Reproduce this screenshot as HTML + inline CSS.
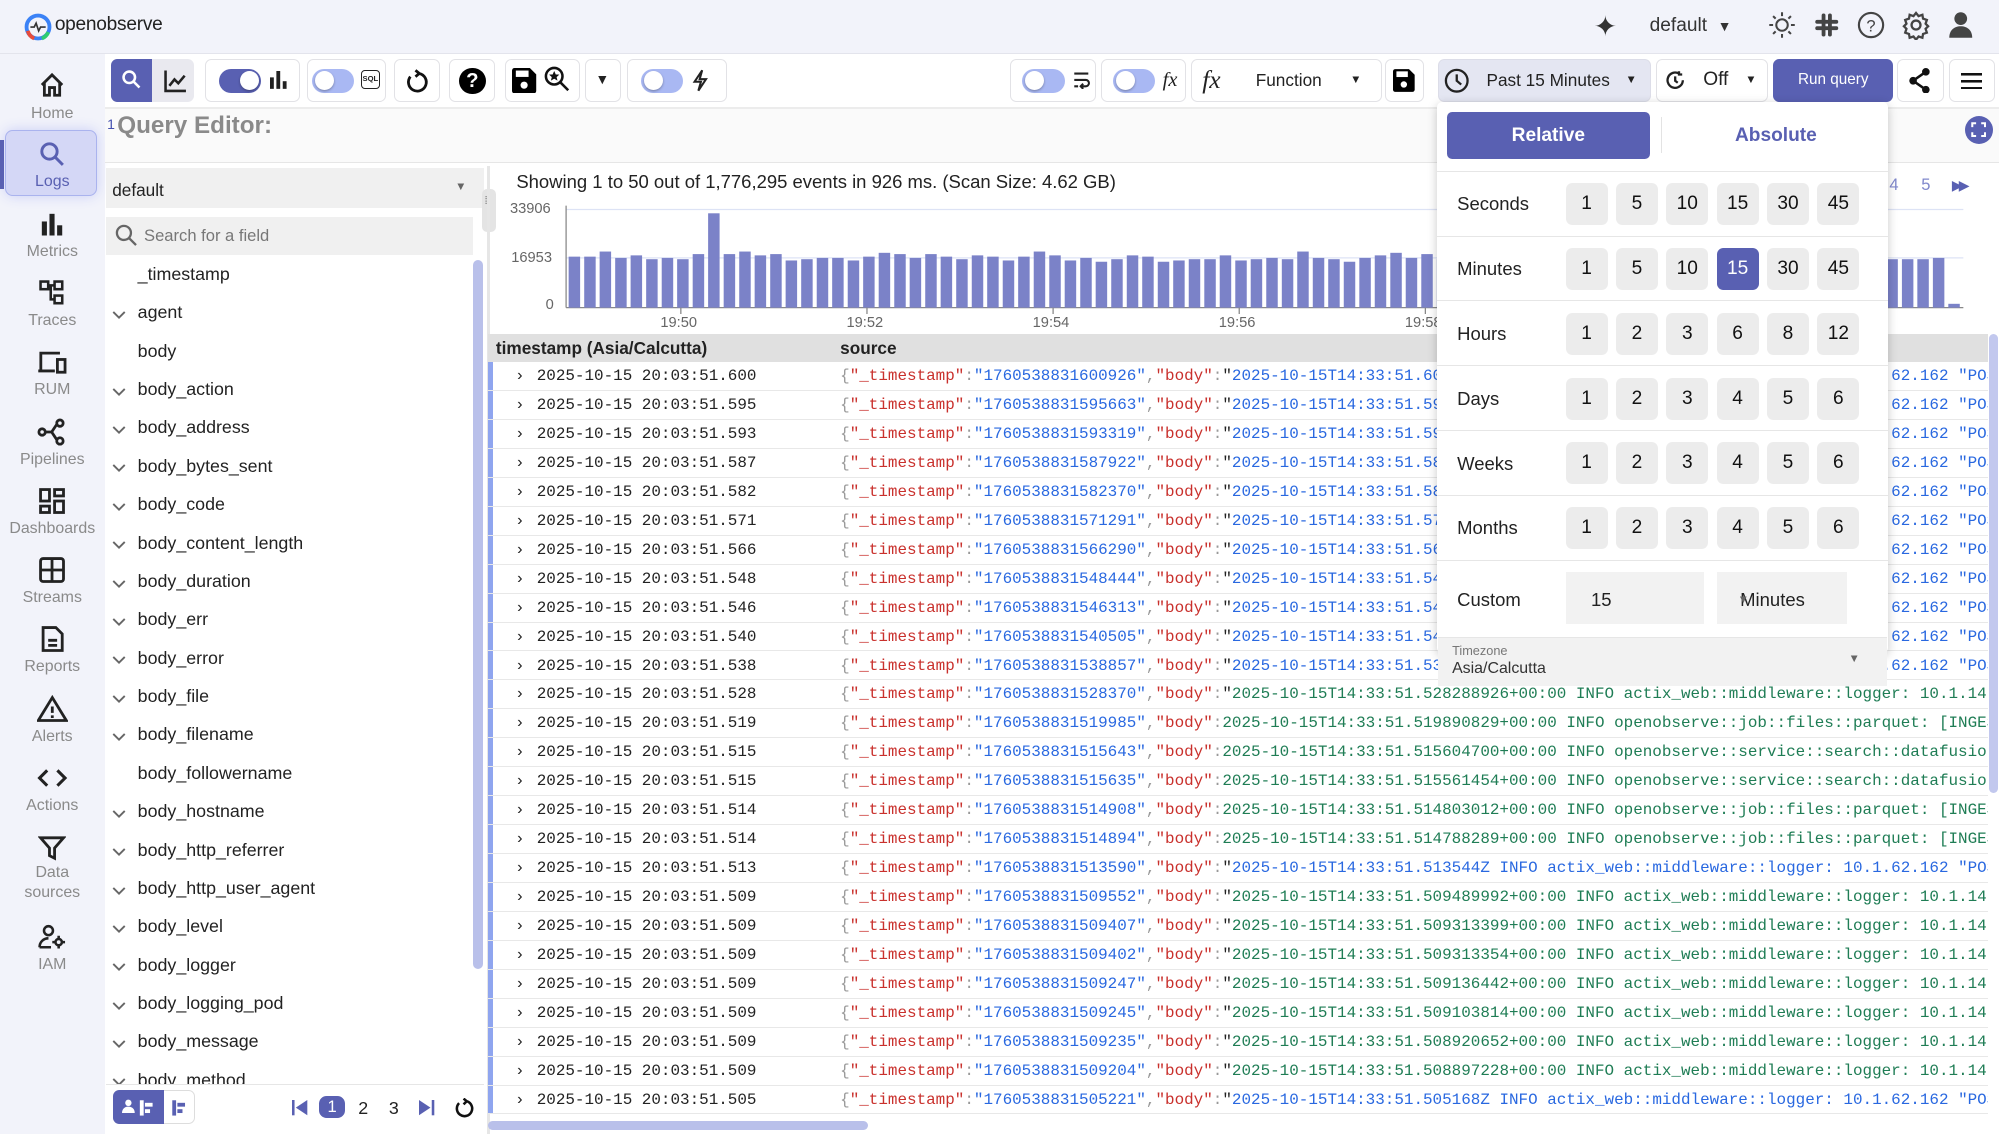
<!DOCTYPE html>
<html><head><meta charset="utf-8">
<style>
*{box-sizing:border-box;margin:0;padding:0}
html,body{width:1999px;height:1134px;overflow:hidden;background:#fff}
#r{zoom:1.27487;width:1568px;height:890px;position:relative;font-family:"Liberation Sans",sans-serif;color:#222;overflow:hidden;background:#fff}
.a{position:absolute}
.hdr{left:0;top:0;width:1568px;height:42px;background:#f2f3fa;border-bottom:1px solid #e3e4ec}
.nav{left:0;top:42px;width:82px;height:848px;background:#f2f3fa}
.ni{position:absolute;left:0;width:82px;text-align:center;font-size:12.5px;color:#8a8a8a}
.ni svg{display:block;margin:0 auto 4px}
.tb{position:absolute;top:46px;height:34px;border:1px solid #e2e2e6;border-radius:5px;background:#fff}
.tog{position:absolute;width:33px;height:19px;border-radius:10px;background:#a9b8f3}
.tog i{position:absolute;top:2px;width:15px;height:15px;border-radius:50%;background:#fff;box-shadow:0 1px 2px rgba(0,0,0,.3)}
.fl{position:absolute;left:108px;font-size:14px;color:#222}
.fc{position:absolute;left:88px;font-size:11px;color:#666}
.mono{font-family:"Liberation Mono",monospace;font-size:12.5px;white-space:pre}
.row{position:absolute;left:383px;width:1176px;height:22.7px;border-bottom:1px solid #e8e8e8;background:#fff}
.row .bl{position:absolute;left:0;top:0;width:4px;height:100%;background:#8fa5ef}
.k{color:#c9302c}.v{color:#2968e0}.g{color:#1f7d55}.p{color:#999}
.dd{left:1127px;top:80px;width:354px;height:432px;background:#fff;border-radius:4px;box-shadow:0 2px 8px rgba(0,0,0,.22)}
.dr{position:absolute;left:0;width:354px;height:51px;border-top:1px solid #e6e6e6}
.dr span{position:absolute;left:16px;top:17px;font-size:14.5px;color:#222}
.bt{position:absolute;top:9px;width:33px;height:33px;border-radius:5px;background:#ececec;font-size:15px;text-align:center;line-height:33px;color:#111}
</style></head><body><div id="r">

<div class="a hdr"></div>
<svg class="a" style="left:19px;top:10px" width="22" height="22" viewBox="0 0 22 22"><circle cx="11" cy="11" r="9" fill="none" stroke="#3b82f6" stroke-width="3"/><path d="M3 14a9 9 0 0 0 5 6" stroke="#e74c3c" stroke-width="3" fill="none"/><path d="M14 20a9 9 0 0 0 5-5" stroke="#2ecc71" stroke-width="3" fill="none"/><path d="M5 11h3l1.5-3 2 6 1.5-3h4" stroke="#333" stroke-width="1.3" fill="none"/></svg>
<div class="a" style="left:43px;top:11px;font-size:15px;color:#222;letter-spacing:-.2px">openobserve</div>

<div class="a" style="left:1250px;top:8px;font-size:22px;color:#333">✦</div>
<div class="a" style="left:1294px;top:12px;font-size:15px;color:#333">default&nbsp;&nbsp;<span style="font-size:11px">▼</span></div>
<svg class="a" style="left:1387px;top:9px" width="22" height="22" viewBox="0 0 22 22" fill="none" stroke="#444" stroke-width="1.6"><circle cx="11" cy="11" r="4.5"/><path d="M11 1v3M11 18v3M1 11h3M18 11h3M4 4l2 2M16 16l2 2M4 18l2-2M16 6l2-2"/></svg>
<svg class="a" style="left:1423px;top:9px" width="20" height="22" viewBox="0 0 20 22" fill="#444"><rect x="6" y="2" width="3" height="18" rx="1.5"/><rect x="11" y="2" width="3" height="18" rx="1.5"/><rect x="1" y="7" width="18" height="3" rx="1.5"/><rect x="1" y="12" width="18" height="3" rx="1.5"/></svg>
<svg class="a" style="left:1457px;top:9px" width="22" height="22" viewBox="0 0 22 22"><circle cx="11" cy="11" r="9.5" fill="none" stroke="#444" stroke-width="1.7"/><text x="11" y="16" font-size="13" text-anchor="middle" fill="#444" font-family="Liberation Sans">?</text></svg>
<svg class="a" style="left:1492px;top:9px" width="22" height="22" viewBox="0 0 22 22" fill="none" stroke="#444" stroke-width="1.8"><circle cx="11" cy="11" r="3.5"/><path d="M11 1.5l2 2.5 3-1 .5 3 3 1-1 3 2 2-2 2 1 3-3 1-.5 3-3-1-2 2.5-2-2.5-3 1-.5-3-3-1 1-3-2-2 2-2-1-3 3-1 .5-3 3 1z"/></svg>
<svg class="a" style="left:1528px;top:9px" width="20" height="22" viewBox="0 0 20 22" fill="#444"><circle cx="10" cy="6" r="5"/><path d="M1 21c0-6 4-9 9-9s9 3 9 9z"/></svg>

<div class="a nav"></div>
<div class="a" style="left:4px;top:102px;width:72px;height:52px;border-radius:6px;background:#d4d7f6;border:1px solid #aab3ee;box-shadow:0 0 10px #c9cef7"></div>
<div class="a" style="left:0;top:110px;width:3px;height:38px;background:#5960b2"></div>
<div class="ni" style="top:56px"><svg width="22" height="22" viewBox="0 0 22 22" fill="none" stroke="#222" stroke-width="2.2"><path d="M3 11l8-8 8 8M5 9v10h4v-6h4v6h4V9"/></svg>Home</div>
<div class="ni" style="top:110px;color:#5960b2"><svg width="22" height="22" viewBox="0 0 22 22" fill="none" stroke="#5960b2" stroke-width="2.3"><circle cx="9" cy="9" r="6"/><path d="M13.5 13.5l6 6"/></svg>Logs</div>
<div class="ni" style="top:165px"><svg width="22" height="22" viewBox="0 0 22 22" fill="#222"><rect x="3" y="9" width="4" height="11"/><rect x="9" y="3" width="4" height="17"/><rect x="15" y="12" width="4" height="8"/></svg>Metrics</div>
<div class="ni" style="top:219px"><svg width="22" height="22" viewBox="0 0 22 22" fill="none" stroke="#222" stroke-width="2"><rect x="2" y="2" width="6" height="6"/><rect x="13" y="2" width="6" height="6"/><rect x="13" y="13" width="6" height="6"/><path d="M8 5h5M10 5v11h3"/></svg>Traces</div>
<div class="ni" style="top:273px"><svg width="24" height="22" viewBox="0 0 24 22" fill="none" stroke="#222" stroke-width="2.2"><path d="M3 17V4h15M1 18h13"/><rect x="16" y="9" width="6" height="10"/></svg>RUM</div>
<div class="ni" style="top:328px"><svg width="24" height="22" viewBox="0 0 24 22" fill="none" stroke="#222" stroke-width="2.2"><circle cx="4" cy="11" r="2.5"/><circle cx="18" cy="4" r="2.5"/><circle cx="18" cy="18" r="2.5"/><path d="M6.5 11h5l4-6M11.5 11l4 6"/></svg>Pipelines</div>
<div class="ni" style="top:382px"><svg width="22" height="22" viewBox="0 0 22 22" fill="none" stroke="#222" stroke-width="2.2"><rect x="2" y="2" width="7" height="9"/><rect x="13" y="2" width="7" height="5"/><rect x="2" y="15" width="7" height="5"/><rect x="13" y="11" width="7" height="9"/></svg>Dashboards</div>
<div class="ni" style="top:436px"><svg width="22" height="22" viewBox="0 0 22 22" fill="none" stroke="#222" stroke-width="2.2"><rect x="2" y="2" width="18" height="18" rx="2"/><path d="M11 2v18M2 11h18"/></svg>Streams</div>
<div class="ni" style="top:490px"><svg width="22" height="22" viewBox="0 0 22 22" fill="none" stroke="#222" stroke-width="2.2"><path d="M4 2h10l5 5v13H4z"/><path d="M8 12h7M8 16h7"/></svg>Reports</div>
<div class="ni" style="top:545px"><svg width="24" height="22" viewBox="0 0 24 22" fill="none" stroke="#222" stroke-width="2.2"><path d="M12 2L1 20h22z"/><path d="M12 9v5M12 16v2"/></svg>Alerts</div>
<div class="ni" style="top:599px"><svg width="24" height="22" viewBox="0 0 24 22" fill="none" stroke="#222" stroke-width="2.4"><path d="M8 5l-6 6 6 6M16 5l6 6-6 6"/></svg>Actions</div>
<div class="ni" style="top:654px;line-height:16px"><svg width="22" height="22" viewBox="0 0 22 22" fill="none" stroke="#222" stroke-width="2.2" style="margin-bottom:1px"><path d="M2 3h18l-7 8v8l-4-2v-6z"/></svg>Data<br>sources</div>
<div class="ni" style="top:724px"><svg width="24" height="22" viewBox="0 0 24 22" fill="none" stroke="#222" stroke-width="2"><circle cx="9" cy="6" r="3.5"/><path d="M2 19c0-4 3-7 7-7M2 19h9"/><circle cx="17" cy="15" r="2.5"/><path d="M17 10v2M17 18v2M12 15h2M20 15h2"/></svg>IAM</div>

<!-- toolbar -->
<div class="tb" style="left:87px;width:65px;background:#e9e9ef;border:none"></div>
<div class="a" style="left:87px;top:46px;width:32px;height:34px;background:#5960b2;border-radius:5px 0 0 5px"></div>
<svg class="a" style="left:95px;top:54px" width="16" height="17" viewBox="0 0 16 17" fill="none" stroke="#fff" stroke-width="2"><circle cx="6.5" cy="6.5" r="4.5"/><path d="M10 10l4.5 4.5"/></svg>
<svg class="a" style="left:128px;top:53px" width="20" height="20" viewBox="0 0 20 20" fill="none" stroke="#222" stroke-width="2"><path d="M2 2v16h16M5 14l4-5 3 3 5-6"/></svg>
<div class="tb" style="left:161px;width:74px"></div>
<div class="tog" style="left:172px;top:54px;background:#5960b2"><i style="left:16px"></i></div>
<svg class="a" style="left:212px;top:56px" width="13" height="14" fill="#222"><rect x="0" y="5" width="3" height="9"/><rect x="5" y="0" width="3" height="14"/><rect x="10" y="8" width="3" height="6"/></svg>
<div class="tb" style="left:241px;width:62px"></div>
<div class="tog" style="left:245px;top:54px"><i style="left:2px"></i></div>
<div class="a" style="left:283px;top:55px;width:15px;height:15px;border:1.5px solid #222;border-radius:3px;font-size:6px;font-weight:bold;line-height:12px;text-align:center">SQL</div>
<div class="tb" style="left:309px;width:36px"></div>
<svg class="a" style="left:317px;top:54px" width="20" height="20" viewBox="0 0 20 20" fill="none" stroke="#111" stroke-width="2.2"><path d="M12 3.5A7 7 0 1 1 5 6M12 3.5L9 1M12 3.5L9 6"/></svg>
<div class="tb" style="left:352px;width:36px"></div>
<div class="a" style="left:360px;top:53px;width:21px;height:21px;border-radius:50%;background:#000;color:#fff;font-weight:bold;font-size:16px;text-align:center;line-height:21px">?</div>
<div class="tb" style="left:396px;width:59px"></div>
<svg class="a" style="left:402px;top:53px" width="19" height="20" viewBox="0 0 19 20"><path d="M0 2a2 2 0 0 1 2-2h12l5 5v13a2 2 0 0 1-2 2H2a2 2 0 0 1-2-2z" fill="#000"/><rect x="3" y="2" width="10" height="5" fill="#fff"/><circle cx="9.5" cy="13.5" r="2.8" fill="#fff"/></svg>
<svg class="a" style="left:427px;top:52px" width="21" height="22" viewBox="0 0 21 22" fill="none" stroke="#111" stroke-width="2"><circle cx="8" cy="8" r="6.5"/><path d="M13 13l6 6"/><path d="M8 4.5l1 2.3 2.4.2-1.8 1.6.6 2.4L8 9.7 5.8 11l.6-2.4L4.6 7l2.4-.2z" fill="#111" stroke-width=".5"/></svg>
<div class="tb" style="left:459px;width:28px"></div>
<div class="a" style="left:467px;top:56px;font-size:11px">▼</div>
<div class="tb" style="left:492px;width:78px"></div>
<div class="tog" style="left:503px;top:54px"><i style="left:2px"></i></div>
<svg class="a" style="left:543px;top:54px" width="12" height="18" viewBox="0 0 12 18" fill="none" stroke="#222" stroke-width="1.6"><path d="M8 1L2 10h5l-2 7 6-9H6z"/></svg>

<div class="tb" style="left:792px;width:68px"></div>
<div class="tog" style="left:802px;top:54px"><i style="left:2px"></i></div>
<svg class="a" style="left:842px;top:56px" width="13" height="14" fill="none" stroke="#222" stroke-width="1.6"><path d="M1 2h11M1 7h9a2.5 2.5 0 0 1 0 5H7M1 12h3M8 10l-2 2 2 2"/></svg>
<div class="tb" style="left:864px;width:66px"></div>
<div class="tog" style="left:873px;top:54px"><i style="left:2px"></i></div>
<div class="a" style="left:912px;top:54px;font-family:'Liberation Serif',serif;font-style:italic;font-size:16px">fx</div>
<div class="tb" style="left:934px;width:150px"></div>
<div class="a" style="left:943px;top:51px;font-family:'Liberation Serif',serif;font-style:italic;font-size:20px">fx</div>
<div class="a" style="left:985px;top:55px;font-size:13.5px">Function</div>
<div class="a" style="left:1059px;top:58px;font-size:9px">▼</div>
<div class="tb" style="left:1086px;width:31px"></div>
<svg class="a" style="left:1093px;top:54px" width="17" height="18" viewBox="0 0 19 20"><path d="M0 2a2 2 0 0 1 2-2h12l5 5v13a2 2 0 0 1-2 2H2a2 2 0 0 1-2-2z" fill="#000"/><rect x="3" y="2" width="10" height="5" fill="#fff"/><circle cx="9.5" cy="13.5" r="2.8" fill="#fff"/></svg>
<div class="tb" style="left:1128px;width:167px;background:#e4e6f2;border-color:#dcdde8"></div>
<svg class="a" style="left:1133px;top:53px" width="20" height="20" viewBox="0 0 20 20" fill="none" stroke="#222" stroke-width="1.8"><circle cx="10" cy="10" r="8.5"/><path d="M10 5v5l3.5 3"/></svg>
<div class="a" style="left:1166px;top:55px;font-size:13.5px">Past 15 Minutes</div>
<div class="a" style="left:1275px;top:58px;font-size:9px">▼</div>
<div class="tb" style="left:1299px;width:88px"></div>
<svg class="a" style="left:1306px;top:55px" width="16" height="16" viewBox="0 0 16 16" fill="none" stroke="#222" stroke-width="1.8"><path d="M14 8A6 6 0 1 1 11 2.8M11 1v2.5H13.5M8 5v3.5l2 1.5"/></svg>
<div class="a" style="left:1336px;top:54px;font-size:15px">Off</div>
<div class="a" style="left:1369px;top:58px;font-size:9px">▼</div>
<div class="tb" style="left:1391px;width:94px;background:#5960b2;border-color:#5960b2"></div>
<div class="a" style="left:1391px;top:56px;width:94px;text-align:center;font-size:12px;color:#fff">Run query</div>
<div class="tb" style="left:1488px;width:37px"></div>
<svg class="a" style="left:1497px;top:53px" width="18" height="20" viewBox="0 0 18 20" fill="#111" stroke="#111" stroke-width="2"><circle cx="14" cy="3" r="2"/><circle cx="4" cy="10" r="2"/><circle cx="14" cy="17" r="2"/><path d="M14 3L4 10l10 7" fill="none"/></svg>
<div class="tb" style="left:1529px;width:36px"></div>
<svg class="a" style="left:1538px;top:57px" width="17" height="13" fill="#111"><rect y="0" width="17" height="2"/><rect y="5.5" width="17" height="2"/><rect y="11" width="17" height="2"/></svg>

<!-- query editor -->
<div class="a" style="left:82px;top:84px;width:1486px;height:44px;background:#fafafa;border-top:2px solid #ececec;border-bottom:1px solid #e6e6e6"></div>
<div class="a" style="left:84px;top:91px;font-size:11px;color:#4450b0">1</div>
<div class="a" style="left:92px;top:88px;font-size:19px;font-weight:bold;color:#8a8a8a">Query Editor:</div>
<div class="a" style="left:1541px;top:91px;width:22px;height:22px;border-radius:50%;background:#5960b2"></div>
<svg class="a" style="left:1546px;top:96px" width="12" height="12" fill="none" stroke="#fff" stroke-width="1.6"><path d="M1 4V1h3M8 1h3v3M11 8v3H8M4 11H1V8"/></svg>

<!-- field list -->
<div class="a" style="left:83px;top:130px;width:297px;height:760px;background:#fff"></div>
<div class="a" style="left:83px;top:132px;width:297px;height:31px;background:#f0f0f0"></div>
<div class="a" style="left:88px;top:141px;font-size:13.5px">default</div>
<div class="a" style="left:357px;top:142px;font-size:9px;color:#666">▼</div>
<div class="a" style="left:83px;top:170px;width:288px;height:30px;background:#f0f0f0"></div>
<svg class="a" style="left:90px;top:176px" width="18" height="18" fill="none" stroke="#666" stroke-width="1.8"><circle cx="7" cy="7" r="5.5"/><path d="M11 11l5.5 5.5"/></svg>
<div class="a" style="left:113px;top:177px;font-size:13px;color:#777">Search for a field</div>
<div class="a" style="left:371px;top:204px;width:8px;height:556px;border-radius:4px;background:#b9c0ea"></div>
<div class="a" style="left:378px;top:148px;width:11px;height:34px;border-radius:4px;background:#e4e4e4"></div>
<div class="a" style="left:380px;top:155px;font-size:9px;color:#777;line-height:5px">⁞⁞</div>
<div id="fields"></div>

<div class="a" style="left:83px;top:850px;width:297px;height:40px;background:#fff;border-top:1px solid #e6e6e6"></div>
<div class="a" style="left:89px;top:855px;width:64px;height:27px;border-radius:5px;border:1px solid #ddd"></div>
<div class="a" style="left:89px;top:855px;width:40px;height:27px;border-radius:5px 0 0 5px;background:#5960b2"></div>
<svg class="a" style="left:96px;top:862px" width="28" height="14" fill="#fff"><circle cx="5" cy="3" r="2.5"/><path d="M0 11c0-3 2-5 5-5s5 2 5 5z"/><rect x="14" y="1" width="3" height="12"/><rect x="18" y="3" width="6" height="3"/><rect x="18" y="8" width="4" height="3"/></svg>
<svg class="a" style="left:134px;top:862px" width="14" height="14" fill="#5960b2"><rect x="1" y="1" width="3" height="12"/><rect x="5" y="3" width="6" height="3"/><rect x="5" y="8" width="4" height="3"/></svg>
<svg class="a" style="left:229px;top:863px" width="13" height="12" fill="#5960b2"><rect x="0" y="0" width="2" height="12"/><path d="M12 0v12L3 6z"/></svg>
<div class="a" style="left:250px;top:860px;width:21px;height:17px;border-radius:6px;background:#5960b2;color:#fff;font-size:13px;text-align:center;line-height:17px">1</div>
<div class="a" style="left:281px;top:861px;font-size:14px">2</div>
<div class="a" style="left:305px;top:861px;font-size:14px">3</div>
<svg class="a" style="left:329px;top:863px" width="13" height="12" fill="#5960b2"><path d="M0 0v12l9-6z"/><rect x="10" y="0" width="2" height="12"/></svg>
<svg class="a" style="left:356px;top:861px" width="16" height="16" fill="none" stroke="#111" stroke-width="2"><path d="M10 2.5A6 6 0 1 1 4 4M10 2.5L7.5 0.5M10 2.5L7.5 5"/></svg>

<!-- results -->
<div class="a" style="left:382px;top:130px;width:2px;height:760px;background:#e6e6e6"></div>
<div class="a" style="left:405px;top:134px;font-size:14.5px;color:#222">Showing 1 to 50 out of 1,776,295 events in 926 ms. (Scan Size: 4.62 GB)</div>
<div class="a" style="left:1482px;top:137px;font-size:13px;color:#8088cc">4</div>
<div class="a" style="left:1507px;top:137px;font-size:13px;color:#8088cc">5</div>
<div class="a" style="left:1531px;top:139px;font-size:11px;color:#5960b2;letter-spacing:-3px">▶▶</div>
<div class="a" style="left:400px;top:158px;font-size:11.5px;color:#666">33906</div>
<div class="a" style="left:401px;top:196px;font-size:11.5px;color:#666">16953</div>
<div class="a" style="left:428px;top:233px;font-size:11.5px;color:#666">0</div>
<svg class="a" id="chart" style="left:440px;top:155px" width="1110" height="110"></svg>
<div class="a" style="left:518px;top:247px;font-size:11.5px;color:#666">19:50</div>
<div class="a" style="left:664px;top:247px;font-size:11.5px;color:#666">19:52</div>
<div class="a" style="left:810px;top:247px;font-size:11.5px;color:#666">19:54</div>
<div class="a" style="left:956px;top:247px;font-size:11.5px;color:#666">19:56</div>
<div class="a" style="left:1102px;top:247px;font-size:11.5px;color:#666">19:58</div>

<div class="a" style="left:383px;top:262px;width:1176px;height:22px;background:#e0e0e0"></div>
<div class="a" style="left:389px;top:265px;font-size:13.5px;font-weight:bold;color:#222">timestamp (Asia/Calcutta)</div>
<div class="a" style="left:659px;top:265px;font-size:13.5px;font-weight:bold;color:#222">source</div>
<div id="rows"></div>
<div class="a" style="left:1559px;top:262px;width:9px;height:628px;background:#fff"></div>
<div class="a" style="left:1560px;top:262px;width:7px;height:360px;border-radius:4px;background:#c2c8ee"></div>
<div class="a" style="left:383px;top:879px;width:298px;height:7px;border-radius:4px;background:#b9c0ea"></div>

<!-- dropdown -->
<div class="a dd">
 <div class="a" style="left:8px;top:8px;width:159px;height:37px;border-radius:4px;background:#5960b2;color:#fff;font-size:15px;font-weight:bold;text-align:center;line-height:37px">Relative</div>
 <div class="a" style="left:176px;top:12px;width:1px;height:28px;background:#e3e3e3"></div>
 <div class="a" style="left:186px;top:18px;width:160px;text-align:center;font-size:15px;font-weight:bold;color:#5960b2">Absolute</div>
 <div id="ddrows"></div>
 <div class="dr" style="top:359px;height:60px"><span style="top:22px">Custom</span>
  <div class="a" style="left:101px;top:9px;width:109px;height:41px;background:#f2f2f2;font-size:14.5px;padding:13px 0 0 20px">15</div>
  <div class="a" style="left:220px;top:9px;width:102px;height:41px;background:#f2f2f2;font-size:14.5px;padding:13px 0 0 18px">Minutes&nbsp;&nbsp;<span style="font-size:9px;color:#666">▼</span></div>
 </div>
 <div class="a" style="left:1px;top:420px;width:352px;height:38px;background:#f2f2f2;border-top:1px solid #e6e6e6"></div>
 <div class="a" style="left:12px;top:424px;font-size:10px;color:#777">Timezone</div>
 <div class="a" style="left:12px;top:438px;font-size:12.5px;color:#333">Asia/Calcutta</div>
 <div class="a" style="left:323px;top:432px;font-size:9px;color:#666">▼</div>
</div>

<script>
(function(){
var f=[["_timestamp",0],["agent",1],["body",0],["body_action",1],["body_address",1],["body_bytes_sent",1],["body_code",1],["body_content_length",1],["body_duration",1],["body_err",1],["body_error",1],["body_file",1],["body_filename",1],["body_followername",0],["body_hostname",1],["body_http_referrer",1],["body_http_user_agent",1],["body_level",1],["body_logger",1],["body_logging_pod",1],["body_message",1],["body_method",1]];
var h="";for(var i=0;i<f.length;i++){var y=207+i*30.1;if(y>845)break;h+='<div class="fl" style="top:'+y+'px">'+f[i][0]+'</div>';if(f[i][1])h+='<div class="fc" style="top:'+(y+1)+'px">⌄</div>';}
document.getElementById("fields").innerHTML=h.replace(/⌄/g,'<svg width="11" height="8" viewBox="0 0 11 8" style="margin-top:5px"><path d="M1 1.5l4.5 4.5 4.5-4.5" fill="none" stroke="#666" stroke-width="1.5"/></svg>');
var hs=[40,40,44,39,41,38,39,38,42,74,42,44,41,42,37,38,39,39,37,40,43,42,39,42,40,38,41,40,37,40,44,41,37,39,36,38,41,40,36,37,38,38,41,37,38,39,38,44,39,38,36,39,41,43,39,42,38,76,44,42,39,40,39,41,42,40,38,39,43,41,39,41,42,40,39,45,40,38,40,41,39,40,38,39,42,38,38,38,39,3];
var s='<line x1="4" y1="9" x2="1100" y2="9" stroke="#dde3f5"/><line x1="4" y1="47" x2="1100" y2="47" stroke="#dde3f5"/><line x1="4" y1="6" x2="4" y2="86" stroke="#888"/><line x1="4" y1="86" x2="1100" y2="86" stroke="#888"/>';
for(var i=0;i<hs.length;i++){var x=6+i*12.16;s+='<rect x="'+x.toFixed(1)+'" y="'+(86-hs[i])+'" width="9" height="'+hs[i]+'" fill="#7b82c8"/>';}
[94,240,386,532,678].forEach(function(x){s+='<line x1="'+x+'" y1="86" x2="'+x+'" y2="91" stroke="#888"/>';});
document.getElementById("chart").innerHTML=s;
var R=[["600","600926","b","600871Z"],["595","595663","b","595612Z"],["593","593319","b","593270Z"],["587","587922","b","587874Z"],["582","582370","b","582318Z"],["571","571291","b","571240Z"],["566","566290","b","566233Z"],["548","548444","b","548392Z"],["546","546313","b","546261Z"],["540","540505","b","540457Z"],["538","538857","b","538802Z"],["528","528370","ga","528288926+00:00"],["519","519985","gp","519890829+00:00"],["515","515643","gs","515604700+00:00"],["515","515635","gs","515561454+00:00"],["514","514908","gp","514803012+00:00"],["514","514894","gp","514788289+00:00"],["513","513590","b","513544Z"],["509","509552","ga","509489992+00:00"],["509","509407","ga","509313399+00:00"],["509","509402","ga","509313354+00:00"],["509","509247","ga","509136442+00:00"],["509","509245","ga","509103814+00:00"],["509","509235","ga","508920652+00:00"],["509","509204","ga","508897228+00:00"],["505","505221","b","505168Z"]];
var o="";
for(var i=0;i<R.length;i++){var r=R[i],y=284+i*22.7,body,t=r[2];
var ts='2025-10-15T14:33:51.'+r[3];
if(t=="b")body='"<span class="v">'+ts+' INFO actix_web::middleware::logger: 10.1.62.162 "POST /api/default</span>';
else if(t=="ga")body='"<span class="g">'+ts+' INFO actix_web::middleware::logger: 10.1.14.22 "POST</span>';
else if(t=="gp")body='<span class="g">'+ts+' INFO openobserve::job::files::parquet: [INGESTER]</span>';
else body='<span class="g">'+ts+' INFO openobserve::service::search::datafusion::exec</span>';
o+='<div class="row" style="top:'+y.toFixed(1)+'px"><div class="bl"></div><div class="a mono" style="left:21px;top:4px;color:#222">›</div><div class="a mono" style="left:38px;top:4px;color:#222">2025-10-15 20:03:51.'+r[0]+'</div><div class="a mono" style="left:276px;top:4px;width:900px;overflow:hidden"><span class="p">{</span><span class="k">"_timestamp"</span><span class="p">:</span><span class="v">"1760538831'+r[1]+'"</span><span class="p">,</span><span class="k">"body"</span><span class="p">:</span>'+body+'</div></div>';}
document.getElementById("rows").innerHTML=o;
var D=[["Seconds",["1","5","10","15","30","45"]],["Minutes",["1","5","10","15","30","45"]],["Hours",["1","2","3","6","8","12"]],["Days",["1","2","3","4","5","6"]],["Weeks",["1","2","3","4","5","6"]],["Months",["1","2","3","4","5","6"]]];
var d="";for(var i=0;i<D.length;i++){d+='<div class="dr" style="top:'+(54+i*50.8).toFixed(1)+'px"><span>'+D[i][0]+'</span>';
for(var j=0;j<6;j++){var act=(i==1&&j==3);d+='<div class="bt" style="left:'+(101+j*39.5).toFixed(1)+'px;'+(act?'background:#5960b2;color:#fff':'')+'">'+D[i][1][j]+'</div>';}d+='</div>';}
document.getElementById("ddrows").innerHTML=d;
})();
</script>
</div></body></html>
